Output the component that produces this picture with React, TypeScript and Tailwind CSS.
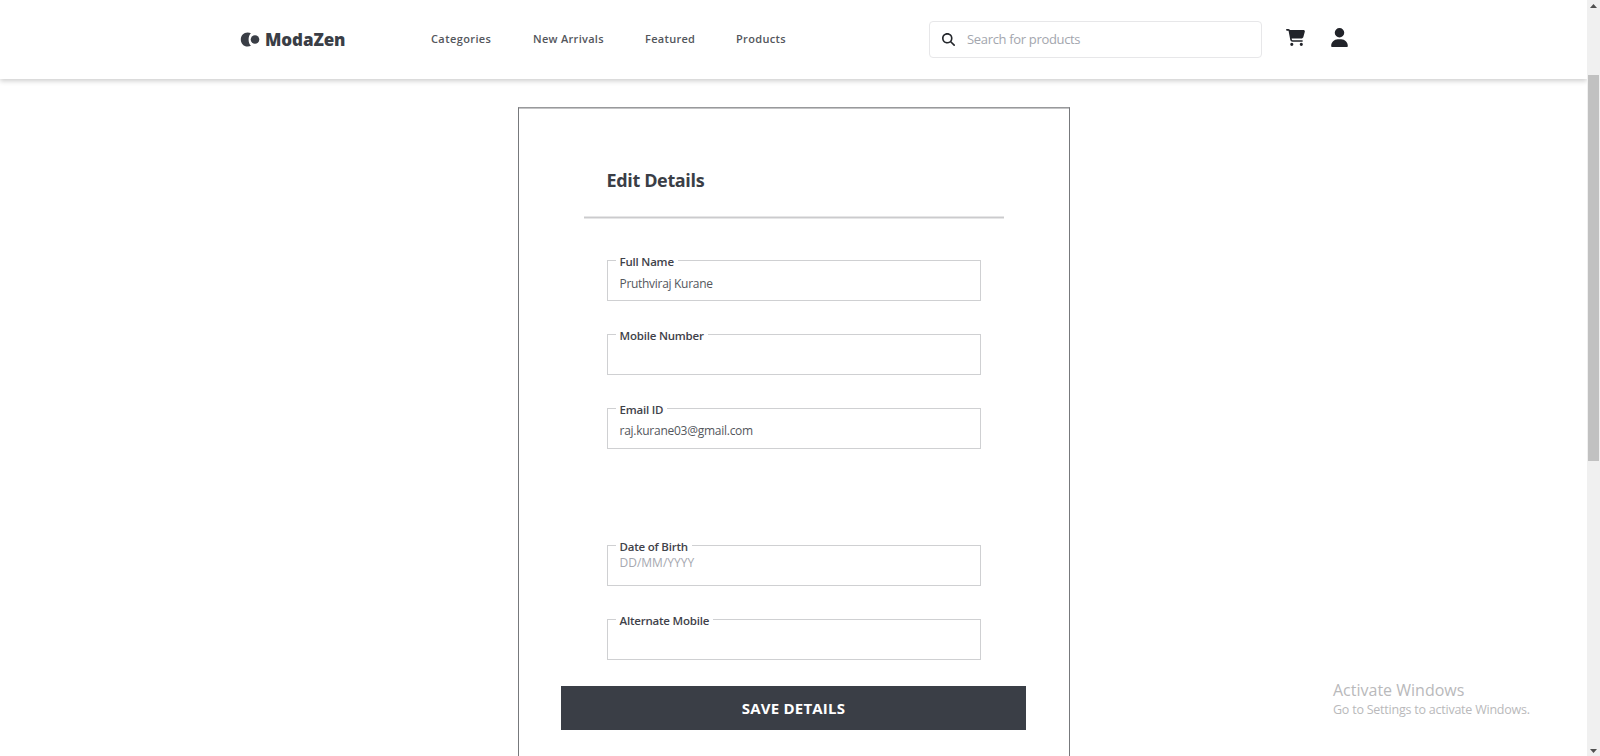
import type { ReactNode } from "react";
import { FaCartShopping, FaMagnifyingGlass, FaUser } from "react-icons/fa6";

function NavLink({ className, children }: { className: string; children: ReactNode }) {
  return (
    <a href="#" className={`block text-[11px] font-semibold leading-4 whitespace-nowrap text-[#53565c] ${className}`}>
      {children}
    </a>
  );
}

function Logo() {
  return (
    <div className="flex h-5 w-[191px] items-center gap-[5px]">
      <svg className="h-[15px] w-5 shrink-0" viewBox="0 0 20 15" fill="#3a3e46">
        <path d="M7.6 0.4C8.9 0.4 10 0.7 10.9 1.2C9.3 2.8 8.6 5 8.6 7.5C8.6 10 9.3 12.2 10.9 13.8C10 14.3 8.9 14.6 7.6 14.6C3.7 14.6 0.8 11.5 0.8 7.5C0.8 3.5 3.7 0.4 7.6 0.4Z" />
        <circle cx="15" cy="7.5" r="4.3" />
      </svg>
      <span className="text-[17px] leading-5 font-black tracking-[-0.1px] text-[#3a3e46]">ModaZen</span>
    </div>
  );
}

function Field({ label, value, valueClass }: { label: string; value?: string; valueClass?: string }) {
  return (
    <div className="relative h-[41px] border border-[#cfd0d2]">
      <span className="absolute -top-2 left-2 bg-white px-1 text-[11.5px] leading-[18px] font-semibold tracking-[-0.2px] whitespace-nowrap text-[#3f424a]">
        {label}
      </span>
      <div className={`pl-3 text-[12px] leading-[18px] whitespace-nowrap ${valueClass ?? ""}`}>{value}</div>
    </div>
  );
}

export default function App() {
  return (
    <div className="flex h-[756px] w-full overflow-hidden bg-white font-['Open_Sans','Noto_Sans',sans-serif]">
      <div className="flex min-w-0 flex-1 flex-col">
        <header className="flex h-[79px] shrink-0 items-center bg-white pl-[240px] shadow-[0_2px_5px_rgba(0,0,0,0.2)]">
          <Logo />
          <nav className="mb-px flex w-[498px] items-center">
            <NavLink className="w-[102px] tracking-[0.4px]">Categories</NavLink>
            <NavLink className="w-[112px] tracking-[0.3px]">New Arrivals</NavLink>
            <NavLink className="w-[91px] tracking-[0.3px]">Featured</NavLink>
            <NavLink className="tracking-[0.35px]">Products</NavLink>
          </nav>
          <div className="flex h-[37px] w-[333px] items-center rounded border border-[#e7e7e9] pl-3">
            <FaMagnifyingGlass className="size-[13px] text-[#24272c]" />
            <span className="mb-0.5 ml-3 text-[13px] leading-5 tracking-[-0.33px] whitespace-nowrap text-[#a3a6ae]">
              Search for products
            </span>
          </div>
          <FaCartShopping className="mb-1 ml-6 h-[17px] w-[19px] text-[#212329]" />
          <FaUser className="mb-1 ml-[26px] h-[19px] w-[17px] text-[#212329]" />
        </header>

        <main className="flex min-h-0 flex-1 justify-center pt-7">
          <section className="flex h-[720px] w-[552px] shrink-0 flex-col items-center border border-[#77797c] border-t-[#98999b] pt-[58px] shadow-[inset_0_1px_0_#c4c4c6]">
            <h1 className="w-[374px] text-[18px] leading-7 font-bold tracking-[-0.36px] text-[#3a3e46]">Edit Details</h1>
            <div className="mt-[22px] h-[3px] w-[420px] shrink-0 border-y border-[#e6e6e7] bg-[#cbcbcd]" />
            <form className="mt-[41px] flex w-[374px] flex-col gap-[33px]">
              <Field
                label="Full Name"
                value="Pruthviraj Kurane"
                valueClass="pt-[14px] tracking-[-0.3px] text-[#54575d]"
              />
              <Field label="Mobile Number" />
              <Field
                label="Email ID"
                value="raj.kurane03@gmail.com"
                valueClass="pt-[13px] tracking-[-0.26px] text-[#54575d]"
              />
              <div className="mt-[63px] flex flex-col gap-[33px]">
                <Field label="Date of Birth" value="DD/MM/YYYY" valueClass="pt-2 text-[#a6a8b0]" />
                <Field label="Alternate Mobile" />
              </div>
            </form>
            <button className="mt-[26px] h-11 w-[465px] shrink-0 bg-[#3a3e46] text-[15px] font-bold tracking-[0.2px] text-white">
              SAVE DETAILS
            </button>
          </section>
        </main>
      </div>

      <aside className="flex w-[13px] shrink-0 flex-col items-center bg-[#f0f0f0]">
        <svg className="mt-1 h-1 w-[7px] shrink-0" viewBox="0 0 7 4" fill="#505050">
          <path d="M0 4L3.5 0L7 4Z" />
        </svg>
        <div className="mt-[67px] h-[386px] w-[11px] bg-[#c1c1c1]" />
        <svg className="mt-auto mb-[3px] h-1 w-[7px] shrink-0" viewBox="0 0 7 4" fill="#505050">
          <path d="M0 0L3.5 4L7 0Z" />
        </svg>
      </aside>

      <div className="absolute top-[679px] left-[1333px] whitespace-nowrap text-[#b9b9bb]">
        <p className="text-[16px] leading-[22px]">Activate Windows</p>
        <p className="text-[12.5px] leading-[18px] tracking-[-0.23px]">Go to Settings to activate Windows.</p>
      </div>
    </div>
  );
}
